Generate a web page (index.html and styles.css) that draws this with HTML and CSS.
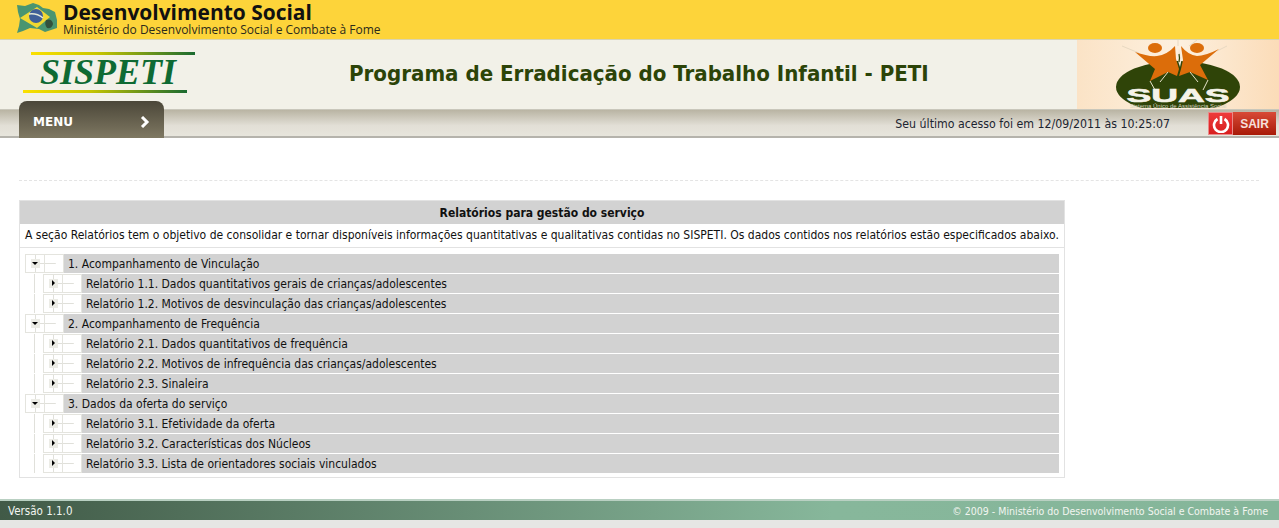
FILE: index.html
```html
<!DOCTYPE html>
<html lang="pt-BR">
<head>
    <meta charset="UTF-8">
    <title>SISPETI</title>
    <link rel="stylesheet" href="styles.css">
</head>
<body>

    <div class="gov-bar">
        <svg class="flag" width="44" height="34" viewBox="0 0 44 34">
            <path d="M2 3 L10 4 L18 1 L24 3 L28 6 L34 7 L40 10 L42 18 L42 26 L36 28 L30 30 L24 27 L15 26 L8 29 L2 31 L4 24 L5 17 L3 10 Z" fill="#4a9570"/>
            <path d="M5 16 L22 5 L35 15 L22 26 Z" fill="#f1d832"/>
            <circle cx="21" cy="14" r="7" fill="#3f5f98"/>
            <path d="M14 12 Q22 11 28 16" stroke="#e2e8d8" stroke-width="1.5" fill="none"/>
            <path d="M31 18 Q37 16 38 22 Q37 27 32 26 Q29 22 31 18 Z" fill="#33513c"/>
        </svg>
        <div class="gov-text">
            <div class="gov-title">Desenvolvimento Social</div>
            <div class="gov-sub">Ministério do Desenvolvimento Social e Combate à Fome</div>
        </div>
    </div>

    <div class="header">
        <div class="logo">
            <div class="logo-line logo-line-top"></div>
            <div class="logo-name">SISPETI</div>
            <div class="logo-line"></div>
        </div>
        <h1 class="page-title">Programa de Erradicação do Trabalho Infantil - PETI</h1>
        <div class="suas">
            <svg width="202" height="68" viewBox="0 0 202 68">
                <path d="M45 6 L62 13 M101 0 L101 6 M120 0 L112 6 M150 6 L140 11" stroke="#e8d9c2" stroke-width="1" fill="none"/>
                <ellipse cx="101" cy="47" rx="62" ry="26" fill="#2f4408"/>
                <path d="M58 12 Q72 17 80 16 Q90 15 98 6 L99 19 L102 29 L100 36 L91 32 L73 41 L78 29 Z" fill="#dc6d0a"/>
                <path d="M142 9 Q128 16 120 16 Q111 15 104 6 L106 20 L104 29 L102 36 L113 32 L131 40 L123 25 Z" fill="#dc6d0a"/>
                <path d="M102 8 Q106 17 103 27 Q99 18 102 8 Z" fill="#f7e9d6"/>
                <path d="M102 14 Q103 18 102 22" stroke="#2f4408" stroke-width="1.2" fill="none"/>
                <path d="M73 41 L78 50 M131 40 L126 50 M91 32 L83 42 M113 32 L121 42" stroke="#e8e4cc" stroke-width="1" fill="none"/>
                <ellipse cx="78" cy="8" rx="7" ry="5" fill="#dc6d0a"/>
                <ellipse cx="120" cy="8" rx="7" ry="5" fill="#dc6d0a"/>
                <text x="101" y="62" class="suas-name" text-anchor="middle" textLength="103" lengthAdjust="spacingAndGlyphs">SUAS</text>
                <text x="101" y="68" class="suas-sub" text-anchor="middle">Sistema Único de Assistência Social</text>
            </svg>
        </div>
    </div>

    <div class="nav">
        <div class="menu-tab">
            <span>MENU</span>
            <svg width="10" height="12" viewBox="0 0 10 12"><path d="M2 1 L7 6 L2 11" stroke="#fff" stroke-width="3" fill="none"/></svg>
        </div>
        <div class="last-access">Seu último acesso foi em 12/09/2011 às 10:25:07</div>
        <div class="logout">
            <span class="logout-icon">
                <svg width="18" height="18" viewBox="0 0 18 18">
                    <path d="M5.5 4 A7 7 0 1 0 12.5 4" stroke="#fff" stroke-width="2.6" fill="none"/>
                    <path d="M9 1 V9" stroke="#fff" stroke-width="2.6"/>
                </svg>
            </span>
            <span class="logout-label">SAIR</span>
        </div>
    </div>

    <div class="content">
        <div class="divider"></div>

        <div class="panel">
            <div class="panel-title">Relatórios para gestão do serviço</div>
            <div class="panel-intro">A seção Relatórios tem o objetivo de consolidar e tornar disponíveis informações quantitativas e qualitativas contidas no SISPETI. Os dados contidos nos relatórios estão especificados abaixo.</div>
            <div class="tree">
                <div class="row"><span class="node open"></span><span class="stub"></span><span class="label">1. Acompanhamento de Vinculação</span></div>
                <div class="row"><span class="guide"></span><span class="node"></span><span class="stub"></span><span class="label">Relatório 1.1. Dados quantitativos gerais de crianças/adolescentes</span></div>
                <div class="row"><span class="guide"></span><span class="node"></span><span class="stub"></span><span class="label">Relatório 1.2. Motivos de desvinculação das crianças/adolescentes</span></div>
                <div class="row"><span class="node open"></span><span class="stub"></span><span class="label">2. Acompanhamento de Frequência</span></div>
                <div class="row"><span class="guide"></span><span class="node"></span><span class="stub"></span><span class="label">Relatório 2.1. Dados quantitativos de frequência</span></div>
                <div class="row"><span class="guide"></span><span class="node"></span><span class="stub"></span><span class="label">Relatório 2.2. Motivos de infrequência das crianças/adolescentes</span></div>
                <div class="row"><span class="guide"></span><span class="node"></span><span class="stub"></span><span class="label">Relatório 2.3. Sinaleira</span></div>
                <div class="row"><span class="node open"></span><span class="stub"></span><span class="label">3. Dados da oferta do serviço</span></div>
                <div class="row"><span class="guide"></span><span class="node"></span><span class="stub"></span><span class="label">Relatório 3.1. Efetividade da oferta</span></div>
                <div class="row"><span class="guide"></span><span class="node"></span><span class="stub"></span><span class="label">Relatório 3.2. Características dos Núcleos</span></div>
                <div class="row"><span class="guide"></span><span class="node"></span><span class="stub"></span><span class="label">Relatório 3.3. Lista de orientadores sociais vinculados</span></div>
            </div>
        </div>
    </div>

    <div class="footer">
        <span class="version">Versão 1.1.0</span>
        <span>© 2009 - Ministério do Desenvolvimento Social e Combate à Fome</span>
    </div>
    <div class="footer-strip"></div>

</body>
</html>
```

FILE: styles.css
```css
* {
    margin: 0;
    padding: 0;
    box-sizing: border-box;
}
html, body {
    height: 528px;
    overflow: hidden;
}
body {
    font-family: "DejaVu Sans Condensed", "DejaVu Sans", Verdana, sans-serif;
    font-stretch: condensed;
    font-size: 12px;
    background-color: #fff;
    color: #111;
}
.gov-bar {
    height: 40px;
    display: flex;
    align-items: flex-start;
    padding: 2px 0 0 15px;
    background-color: #fdd43a;
    border-bottom: 1px solid #d9d4b0;
}
.gov-text {
    margin-left: 4px;
    font-family: "Open Sans", "DejaVu Sans", sans-serif;
    font-stretch: normal;
}
.gov-title {
    font-size: 20.95px;
    font-weight: 700;
    line-height: 21px;
    color: #111;
}
.gov-sub {
    font-size: 12px;
    line-height: 13px;
    color: #2b2a1a;
}
.header {
    height: 70px;
    display: flex;
    align-items: stretch;
    background-color: #f2f1e8;
    border-bottom: 1px solid #c9c7bb;
}
.logo {
    width: 173px;
    margin: 12px 0 0 23px;
}
.logo-line {
    width: 164px;
    height: 3px;
    background: linear-gradient(to right, #fbe000, #c9c600 40%, #1a6a30);
}
.logo-line-top {
    margin-left: 8px;
}
.logo-name {
    font-family: "Liberation Serif", serif;
    font-stretch: normal;
    font-style: italic;
    font-weight: 700;
    font-size: 36px;
    line-height: 35px;
    color: #0e6a33;
    padding-left: 17px;
}
.page-title {
    flex: 1;
    padding: 20px 0 0 153px;
    font-size: 22.08px;
    font-weight: 700;
    line-height: 27px;
    color: #2c4408;
}
.suas {
    width: 202px;
    background: linear-gradient(to right, #fbe3c6, #fdf0df 50%, #fbdcb8);
}
.suas svg {
    display: block;
}
.suas-name {
    font-family: "Liberation Sans", sans-serif;
    font-size: 19px;
    font-weight: 700;
    fill: #f5f3e8;
    stroke: #f5f3e8;
    stroke-width: 0.6;
}
.suas-sub {
    font-family: "Liberation Sans", sans-serif;
    font-size: 6px;
    fill: #d8d6c0;
}
.nav {
    height: 28px;
    display: flex;
    align-items: flex-start;
    background: linear-gradient(to bottom, #b9b4a3, #e2dfd6 60%, #e7e5dc);
    border-bottom: 2px solid #b5b3ac;
    padding-left: 19px;
}
.menu-tab {
    flex-shrink: 0;
    width: 145px;
    height: 37px;
    margin-top: -9px;
    display: flex;
    align-items: center;
    justify-content: space-between;
    padding: 5px 14px 0 14px;
    border-radius: 8px 8px 0 0;
    background: linear-gradient(to bottom, #4b4739, #7f7862);
    color: #fff;
    font-family: "DejaVu Sans", sans-serif;
    font-stretch: normal;
    font-size: 12px;
    font-weight: 700;
}
.last-access {
    margin-left: auto;
    padding-top: 7px;
    font-size: 12.25px;
    line-height: 15px;
    color: #1c2430;
}
.logout {
    display: flex;
    margin: 2px 3px 0 38px;
    height: 23px;
}
.logout-icon {
    width: 25px;
    display: flex;
    align-items: center;
    justify-content: center;
    background: linear-gradient(to bottom, #ee3a3a, #d81f1f);
    border: 1px solid #e98a8a;
}
.logout-label {
    width: 43px;
    display: flex;
    align-items: center;
    justify-content: center;
    background: linear-gradient(to bottom, #d84a36, #a81a08);
    color: #f6e0dc;
    font-family: "Liberation Sans", sans-serif;
    font-stretch: normal;
    font-size: 12px;
    font-weight: 700;
}
.content {
    height: 361px;
    padding: 42px 20px 0 19px;
}
.divider {
    border-top: 1px dashed #e4e4e4;
    margin-bottom: 19px;
}
.panel {
    width: 1046px;
    height: 278px;
    border: 1px solid #e2e2e2;
}
.panel-title {
    height: 23px;
    background-color: #d2d2d2;
    font-weight: 700;
    text-align: center;
    line-height: 24px;
}
.panel-intro {
    height: 24px;
    font-size: 12.03px;
    line-height: 23px;
    padding-left: 5px;
    white-space: nowrap;
    border-bottom: 1px solid #e2e2e2;
}
.tree {
    padding: 6px 5px 0 5px;
}
.row {
    height: 20px;
    display: flex;
    border-bottom: 1px solid #fff;
}
/* tree lines are drawn as 1px backgrounds so the rows stay plain flex items */
.guide {
    width: 18px;
    background: linear-gradient(#e0e0da, #e0e0da) no-repeat 9px 0 / 1px 100%;
}
.node {
    width: 19px;
    position: relative;
    border: 1px solid #e4e4de;
    border-right: 0;
    background:
        linear-gradient(#e0e0da, #e0e0da) no-repeat 9px 0 / 1px 100%,
        linear-gradient(#e0e0da, #e0e0da) no-repeat 9px 8px / 100% 1px;
}
.node::before {
    content: "";
    position: absolute;
    left: 5px;
    top: 4px;
    width: 9px;
    height: 9px;
    background-color: #ecece6;
}
.node::after {
    content: "";
    position: absolute;
    left: 8px;
    top: 5px;
    width: 0;
    height: 0;
    border-left: 3px solid #000;
    border-top: 3px solid transparent;
    border-bottom: 3px solid transparent;
}
.node.open::after {
    left: 6px;
    top: 7px;
    border-top: 3px solid #000;
    border-left: 3px solid transparent;
    border-right: 3px solid transparent;
    border-bottom: 0;
}
.stub {
    width: 20px;
    border: 1px solid #e4e4de;
    background: linear-gradient(#e0e0da, #e0e0da) no-repeat 0 8px / 60% 1px;
}
.label {
    flex: 1;
    background-color: #d2d2d2;
    padding-left: 4px;
    line-height: 20px;
}
.footer {
    height: 21px;
    display: flex;
    justify-content: space-between;
    align-items: center;
    padding: 0 11px 0 8px;
    background: linear-gradient(to right, #415a47, #87b79b 65%, #85b69a);
    border-top: 2px solid #b9d0c2;
    color: #f2f5f0;
    font-size: 10.5px;
}
.version {
    font-size: 11.5px;
}
.footer-strip {
    height: 8px;
    background-color: #e6e6e4;
}
```
